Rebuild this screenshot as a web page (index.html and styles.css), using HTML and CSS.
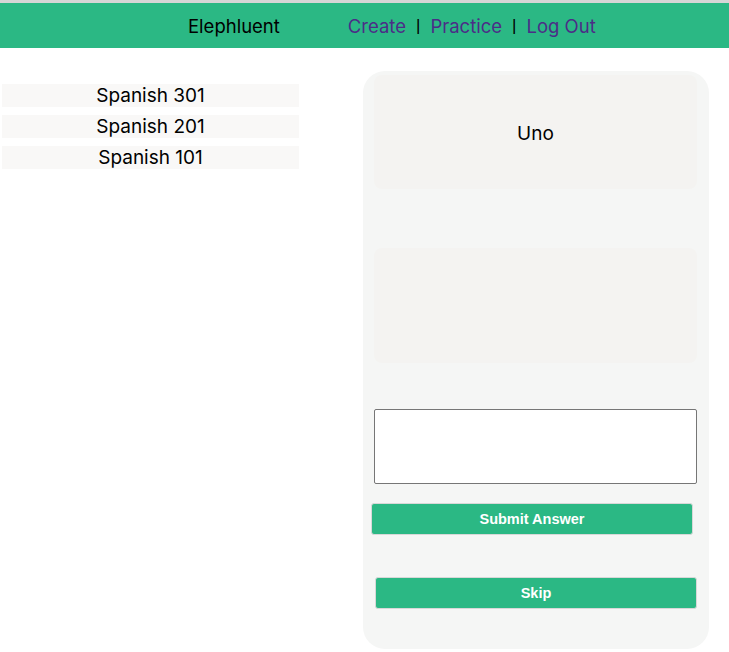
FILE: index.html
```html
<!DOCTYPE html>
<html>
<head>
<meta charset="utf-8">
<link rel="stylesheet" href="styles.css">
</head>
<body>
<header class="topbar">
  <span class="brand">Elephluent</span>
  <nav class="nav">
    <a class="nav-link" href="#">Create</a>
    <span class="sep">|</span>
    <a class="nav-link" href="#">Practice</a>
    <span class="sep">|</span>
    <a class="nav-link" href="#">Log Out</a>
  </nav>
</header>
<main class="main">
  <ul class="decks">
    <li class="deck">Spanish 301</li>
    <li class="deck">Spanish 201</li>
    <li class="deck">Spanish 101</li>
  </ul>
  <section class="card">
    <div class="face face-front">Uno</div>
    <div class="face face-back"></div>
    <textarea class="answer"></textarea>
    <button class="btn btn-submit">Submit Answer</button>
    <button class="btn btn-skip">Skip</button>
  </section>
</main>
</body>
</html>
```

FILE: styles.css
```css
html, body {
  margin: 0;
  padding: 0;
  background: #ffffff;
  font-family: Inter, "Liberation Sans", Arial, sans-serif;
}

.topbar {
  border-top: 3px solid #d6d6d6;
  background: #2bb884;
  height: 44px;
  display: flex;
  align-items: center;
  padding-left: 188px;
  box-sizing: content-box;
  font-size: 18.5px;
  padding-top: 1px;
}

.brand {
  color: #000000;
}

.nav {
  margin-left: 68px;
  display: flex;
  align-items: center;
  gap: 10px;
}

.nav-link {
  color: #4b2d87;
  text-decoration: none;
}

.sep {
  color: #000000;
  font-family: "Liberation Sans", Arial, sans-serif;
  font-size: 17px;
}

.main {
  display: grid;
  grid-template-columns: 297px 346px;
  column-gap: 64px;
  padding-left: 2px;
  padding-top: 23px;
}

.decks {
  list-style: none;
  margin: 13px 0 0 0;
  padding: 0;
  display: flex;
  flex-direction: column;
  gap: 8px;
}

.deck {
  background: #f9f8f7;
  height: 23px;
  line-height: 24px;
  text-align: center;
  font-size: 19px;
  color: #000000;
}

.card {
  background: #f5f6f5;
  border-radius: 22px;
  height: 578px;
  padding: 4px 12px 0 11px;
  box-sizing: border-box;
  display: flex;
  flex-direction: column;
}

.face {
  background: #f4f3f1;
  border-radius: 8px;
  height: 114px;
}

.face-front {
  display: flex;
  align-items: center;
  justify-content: center;
  font-size: 19px;
  color: #000000;
  padding-top: 2px;
  box-sizing: border-box;
}

.face-back {
  margin-top: 59px;
  height: 115px;
}

.answer {
  margin: 46px 0 0 0;
  height: 75px;
  width: 100%;
  box-sizing: border-box;
  border: 1px solid #767676;
  border-radius: 2px;
  background: #ffffff;
  resize: none;
  padding: 2px;
}

.btn {
  height: 32px;
  background: #2bb884;
  color: #ffffff;
  border: 1px solid #d8d8d8;
  border-radius: 3px;
  font-family: "Liberation Sans", Arial, sans-serif;
  font-weight: bold;
  font-size: 14.5px;
  padding: 0;
  width: 322px;
}

.btn-submit {
  margin-top: 19px;
  margin-left: -3px;
}

.btn-skip {
  margin-top: 42px;
  margin-left: 1px;
}
```
